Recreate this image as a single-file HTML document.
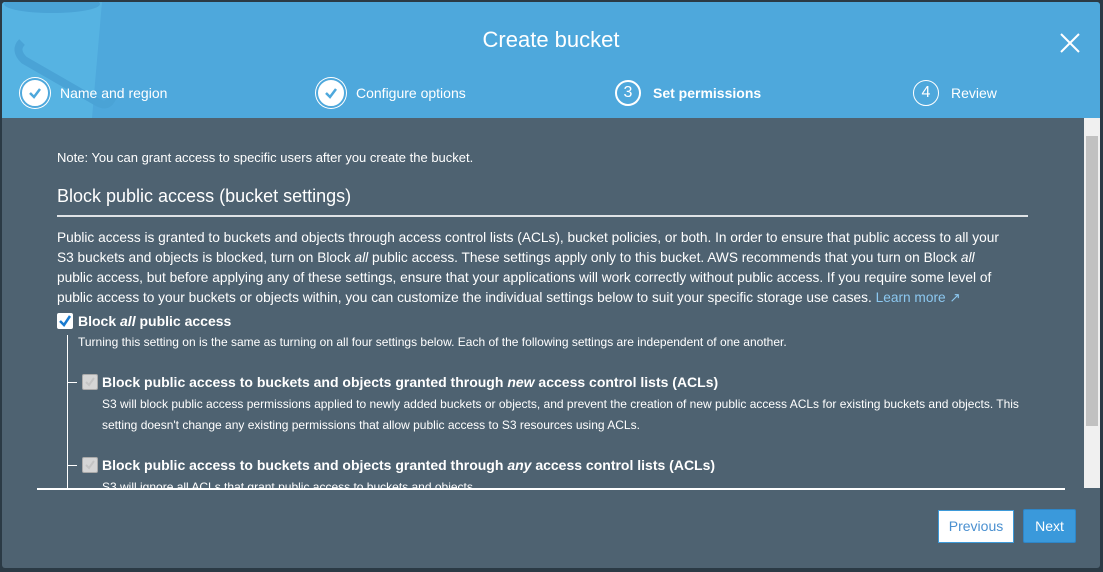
<!DOCTYPE html>
<html><head><style>
*{margin:0;padding:0;box-sizing:border-box}
body{width:1103px;height:572px;background:#2b3a45;font-family:"Liberation Sans",sans-serif;color:#fff;position:relative;overflow:hidden}
.modal{position:absolute;left:2px;top:2px;width:1098px;height:566px;background:#4e6271;border-radius:3px;overflow:hidden}
.hdr{position:absolute;left:0;top:0;width:1098px;height:116px;background:#4ea8dc;overflow:hidden}
.title{position:absolute;left:0;width:1098px;top:25px;text-align:center;font-size:22px}
.step{position:absolute;top:78px;font-size:14px;display:flex;align-items:center}
.circ{width:26px;height:26px;border:2px solid #fff;border-radius:50%;display:flex;align-items:center;justify-content:center;font-size:16px;margin-right:12px}
.t{position:absolute;font-size:13px;line-height:20px}
.cb{position:absolute;width:16px;height:16px;border-radius:2px}
</style></head><body>
<div class="modal">
<div class="hdr">
<svg style="position:absolute;left:0;top:0" width="130" height="116"><path d="M0 0 H100 L90 116 H0Z" fill="#56b3e2"/><path d="M20 40 Q12 48 22 58 L95 100 Q108 108 112 90" stroke="#4aa3d6" stroke-width="8" fill="none"/><ellipse cx="50" cy="2" rx="48" ry="9" fill="#4aa3d6"/></svg>
<div class="title">Create bucket</div>
<svg style="position:absolute;left:1057px;top:30px" width="22" height="22"><path d="M2 2L20 20M20 2L2 20" stroke="#fff" stroke-width="2"/></svg>
<div class="step" style="left:20px"><div class="circ" style="background:#fff;box-shadow:0 0 0 2px #4ea8dc,0 0 0 3px #fff;border-color:#fff"><svg width="14" height="12"><path d="M2 6L6 10L12 2" stroke="#4ea8dc" stroke-width="2.5" fill="none"/></svg></div>Name and region</div>
<div class="step" style="left:316px"><div class="circ" style="background:#fff;box-shadow:0 0 0 2px #4ea8dc,0 0 0 3px #fff;border-color:#fff"><svg width="14" height="12"><path d="M2 6L6 10L12 2" stroke="#4ea8dc" stroke-width="2.5" fill="none"/></svg></div>Configure options</div>
<div class="step" style="left:613px;font-weight:bold"><div class="circ" style="font-weight:normal">3</div>Set permissions</div>
<div class="step" style="left:911px"><div class="circ" style="border-width:1px">4</div>Review</div>
</div>
<div class="t" style="left:55px;top:146px">Note: You can grant access to specific users after you create the bucket.</div>
<div class="t" style="left:55px;top:184px;font-size:18px">Block public access (bucket settings)</div>
<div style="position:absolute;left:55px;top:213px;width:971px;height:2px;background:#dfe3e6"></div>
<div class="t" style="left:55px;top:226px;width:955px;font-size:13.7px">Public access is granted to buckets and objects through access control lists (ACLs), bucket policies, or both. In order to ensure that public access to all your S3 buckets and objects is blocked, turn on Block <i>all</i> public access. These settings apply only to this bucket. AWS recommends that you turn on Block <i>all</i> public access, but before applying any of these settings, ensure that your applications will work correctly without public access. If you require some level of public access to your buckets or objects within, you can customize the individual settings below to suit your specific storage use cases. <span style="color:#8cc8f0">Learn more ↗</span></div>
<div class="cb" style="left:55px;top:311px;background:#fff"><svg width="16" height="16"><path d="M3 8L7 12L13 3" stroke="#1a7bd0" stroke-width="2.5" fill="none"/></svg></div>
<div class="t" style="left:76px;top:309px;font-weight:bold;font-size:14px">Block <i>all</i> public access</div>
<div style="position:absolute;left:65px;top:333px;width:1px;height:154px;background:#fff"></div>
<div class="t" style="left:76px;top:330px;font-size:12px">Turning this setting on is the same as turning on all four settings below. Each of the following settings are independent of one another.</div>
<div style="position:absolute;left:65px;top:380px;width:10px;height:1px;background:#fff"></div>
<div class="cb" style="left:80px;top:372px;background:#d5d5d5;border:1px solid #aaa"><svg width="14" height="14"><path d="M3 7L6 10L11 3" stroke="#c4c4c4" stroke-width="2" fill="none"/></svg></div>
<div class="t" style="left:100px;top:370px;font-weight:bold;font-size:14px">Block public access to buckets and objects granted through <i>new</i> access control lists (ACLs)</div>
<div class="t" style="left:100px;top:392px;font-size:12px;line-height:21px;width:930px">S3 will block public access permissions applied to newly added buckets or objects, and prevent the creation of new public access ACLs for existing buckets and objects. This setting doesn't change any existing permissions that allow public access to S3 resources using ACLs.</div>
<div style="position:absolute;left:65px;top:463px;width:10px;height:1px;background:#fff"></div>
<div class="cb" style="left:80px;top:455px;background:#d5d5d5;border:1px solid #aaa"><svg width="14" height="14"><path d="M3 7L6 10L11 3" stroke="#c4c4c4" stroke-width="2" fill="none"/></svg></div>
<div class="t" style="left:100px;top:453px;font-weight:bold;font-size:14px">Block public access to buckets and objects granted through <i>any</i> access control lists (ACLs)</div>
<div style="position:absolute;left:100px;top:475px;height:11px;overflow:hidden;font-size:12px;line-height:21px">S3 will ignore all ACLs that grant public access to buckets and objects.</div>
<div style="position:absolute;left:35px;top:486px;width:1028px;height:2px;background:#fff"></div>
<div style="position:absolute;left:1082px;top:116px;width:16px;height:370px;background:#f0f0f0"><div style="position:absolute;left:2px;top:18px;width:12px;height:290px;background:#c1c1c1"></div></div>
<div style="position:absolute;left:936px;top:508px;width:76px;height:33px;background:#fff;border:1px solid #3d9ad9;color:#4a90d0;font-size:14px;text-align:center;line-height:31px">Previous</div>
<div style="position:absolute;left:1021px;top:507px;width:53px;height:34px;background:#3a99db;border:1px solid #2e86c8;border-radius:2px;font-size:14px;text-align:center;line-height:32px">Next</div>
</div>
</body></html>
